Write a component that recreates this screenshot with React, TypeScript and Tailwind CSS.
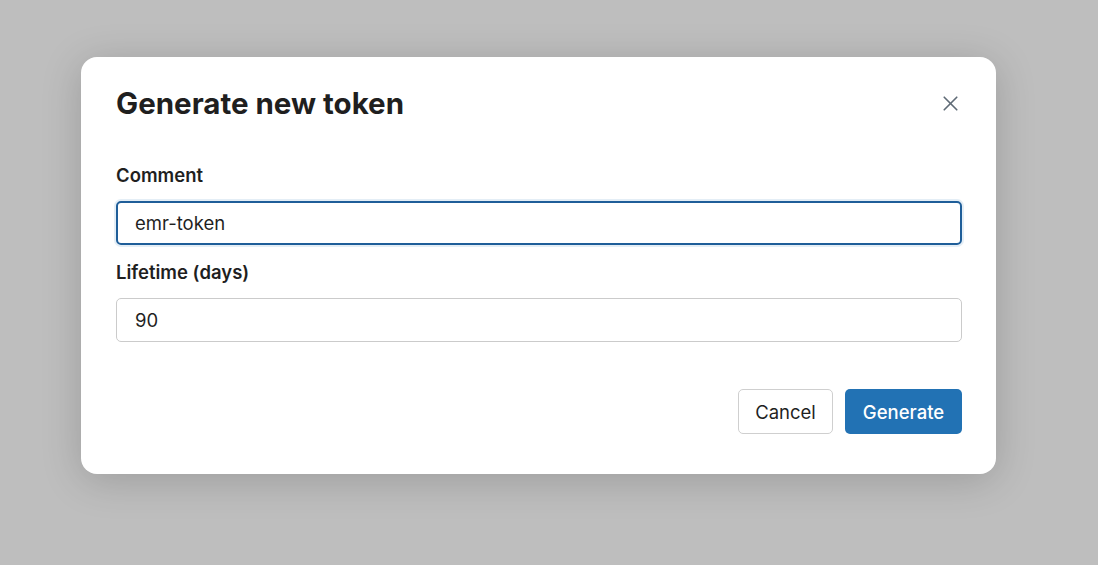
import { X } from "lucide-react";

const font = { fontFamily: "Inter, 'Liberation Sans', sans-serif" };

const App = () => {
  return (
    <div className="w-[1098px] h-[565px] bg-[#bebebe] overflow-hidden" style={font}>
      <div className="ml-[81px] mt-[57px] w-[915px] h-[417px] bg-white rounded-[16px] shadow-[0_6px_40px_rgba(0,0,0,0.18)] pt-[28px] pb-[40px] pl-[35px] pr-[34px] flex flex-col">
        {/* Header */}
        <div className="flex items-center justify-between h-[36px]">
          <h1 className="text-[29.5px] leading-[36px] font-bold text-[#1f1f1f]">Generate new token</h1>
          <button className="w-[28px] h-[28px] flex items-center justify-center text-[#5f6b76] mr-[-2px]">
            <X size={25} strokeWidth={1.6} />
          </button>
        </div>

        {/* Form */}
        <div className="mt-[42px] flex flex-col">
          <label className="text-[18.5px] leading-[24px] font-semibold text-[#1f1f1f]">Comment</label>
          <div className="mt-[14px] h-[44px] rounded-[5px] border-2 border-[#1f5e99] shadow-[0_0_0_2px_rgba(34,114,180,0.12)] flex items-center px-[17px] pt-[2px] text-[18.5px] text-[#1f1f1f]">
            emr-token
          </div>
          <label className="mt-[15px] text-[18.5px] leading-[24px] font-semibold text-[#1f1f1f]">Lifetime (days)</label>
          <div className="mt-[14px] h-[44px] rounded-[5px] border border-[#cbcbcb] flex items-center px-[18px] pt-[2px] text-[18.5px] text-[#1f1f1f]">
            90
          </div>
        </div>

        {/* Footer */}
        <div className="mt-auto flex justify-end gap-[12px]">
          <button className="w-[95px] h-[45px] rounded-[5px] border border-[#cfcfcf] bg-white pt-[2px] text-[18.5px] text-[#1f1f1f]">
            Cancel
          </button>
          <button className="w-[117px] h-[45px] rounded-[5px] bg-[#2272b4] pt-[2px] text-[18.5px] font-medium text-white">
            Generate
          </button>
        </div>
      </div>
    </div>
  );
};

export default App;
